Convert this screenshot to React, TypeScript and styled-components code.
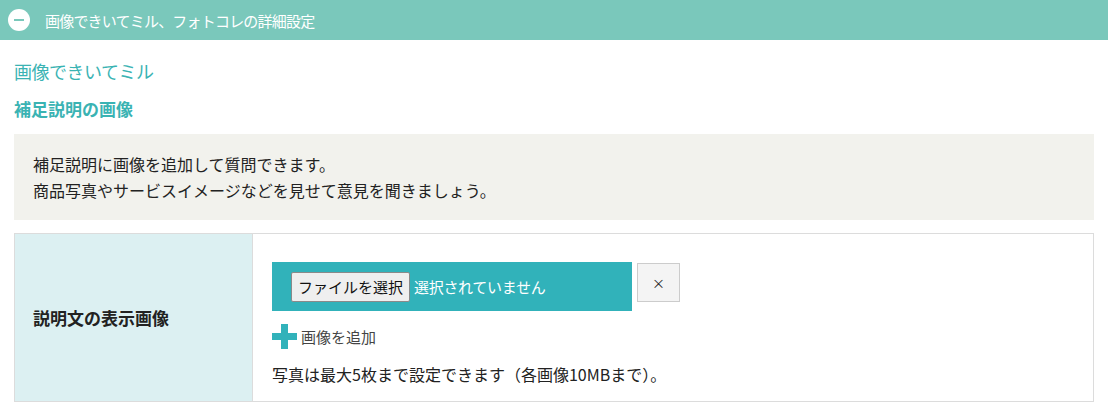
import React from "react";
import styled, { createGlobalStyle } from "styled-components";

const GlobalStyle = createGlobalStyle`
  body {
    margin: 0;
    background: #fff;
    font-family: "Noto Sans CJK JP", "Noto Sans", sans-serif;
    color: #333;
  }
`;

export default function App() {
  return (
    <>
      <GlobalStyle />
      <Header>
        <ToggleIcon>
          <span />
        </ToggleIcon>
        <HeaderTitle>画像できいてミル、フォトコレの詳細設定</HeaderTitle>
      </Header>
      <Body>
        <SectionTitle>画像できいてミル</SectionTitle>
        <SubTitle>補足説明の画像</SubTitle>
        <InfoBox>
          補足説明に画像を追加して質問できます。
          <br />
          商品写真やサービスイメージなどを見せて意見を聞きましょう。
        </InfoBox>
        <Table>
          <LabelCell>説明文の表示画像</LabelCell>
          <ValueCell>
            <FileRow>
              <FileBar>
                <FileButton>ファイルを選択</FileButton>
                <FileStatus>選択されていません</FileStatus>
              </FileBar>
              <ClearButton>×</ClearButton>
            </FileRow>
            <AddLink>
              <PlusIcon />
              画像を追加
            </AddLink>
            <Note>写真は最大5枚まで設定できます（各画像10MBまで）。</Note>
          </ValueCell>
        </Table>
      </Body>
    </>
  );
}

const Header = styled.div`
  display: flex;
  align-items: center;
  height: 40px;
  padding-left: 8px;
  background: #7ac8bb;
`;

const ToggleIcon = styled.div`
  width: 22px;
  height: 22px;
  border-radius: 50%;
  background: #fff;
  display: flex;
  align-items: center;
  justify-content: center;
  margin-right: 15px;

  span {
    width: 10px;
    height: 2px;
    background: #7ac8bb;
  }
`;

const HeaderTitle = styled.div`
  color: #fff;
  font-size: 15px;
  letter-spacing: -0.8px;
`;

const Body = styled.div`
  padding: 0 14px;
`;

const SectionTitle = styled.h2`
  margin: 18px 0 0;
  font-size: 18px;
  font-weight: normal;
  color: #3ab3b3;
  line-height: 26px;
  letter-spacing: -0.5px;
`;

const SubTitle = styled.h3`
  margin: 14px 0 0;
  font-size: 17px;
  font-weight: bold;
  color: #3ab3b3;
  line-height: 22px;
`;

const InfoBox = styled.div`
  margin-top: 14px;
  background: #f2f2ed;
  padding: 17px 19px 17px;
  font-size: 16px;
  line-height: 26px;
  color: #222;
`;

const Table = styled.div`
  display: grid;
  grid-template-columns: 238px 1fr;
  margin-top: 13px;
  border: 1px solid #dcdcdc;
`;

const LabelCell = styled.div`
  background: #dcf0f2;
  border-right: 1px solid #dcdcdc;
  display: flex;
  align-items: center;
  padding: 0 18px;
  font-size: 17px;
  font-weight: bold;
  color: #222;
`;

const ValueCell = styled.div`
  padding: 28px 19px 15px;
`;

const FileRow = styled.div`
  display: flex;
  align-items: flex-start;
  gap: 5px;
`;

const FileBar = styled.div`
  width: 360px;
  height: 49px;
  background: #31b2ba;
  display: flex;
  align-items: center;
  padding-left: 19px;
  box-sizing: border-box;
`;

const FileButton = styled.button`
  height: 30px;
  padding: 0 6px;
  border: 1px solid #8a8a8a;
  border-radius: 2px;
  background: #efefef;
  font-family: inherit;
  font-size: 15px;
  color: #111;
  margin-right: 4px;
`;

const FileStatus = styled.span`
  color: #fff;
  font-size: 15px;
  letter-spacing: -0.3px;
`;

const ClearButton = styled.button`
  width: 43px;
  height: 39px;
  margin-top: 1px;
  border: 1px solid #ccc;
  background: #f4f4f4;
  font-family: inherit;
  font-size: 13px;
  color: #222;
  padding: 0;
`;

const AddLink = styled.div`
  display: flex;
  align-items: center;
  gap: 4px;
  margin-top: 13px;
  font-size: 15px;
  color: #444;
`;

const PlusIcon = () => (
  <svg width="25" height="25" viewBox="0 0 25 25">
    <rect x="9" y="0" width="7" height="25" fill="#31b2ba" />
    <rect x="0" y="9" width="25" height="7" fill="#31b2ba" />
  </svg>
);

const Note = styled.div`
  margin-top: 13px;
  font-size: 16px;
  color: #222;
`;
